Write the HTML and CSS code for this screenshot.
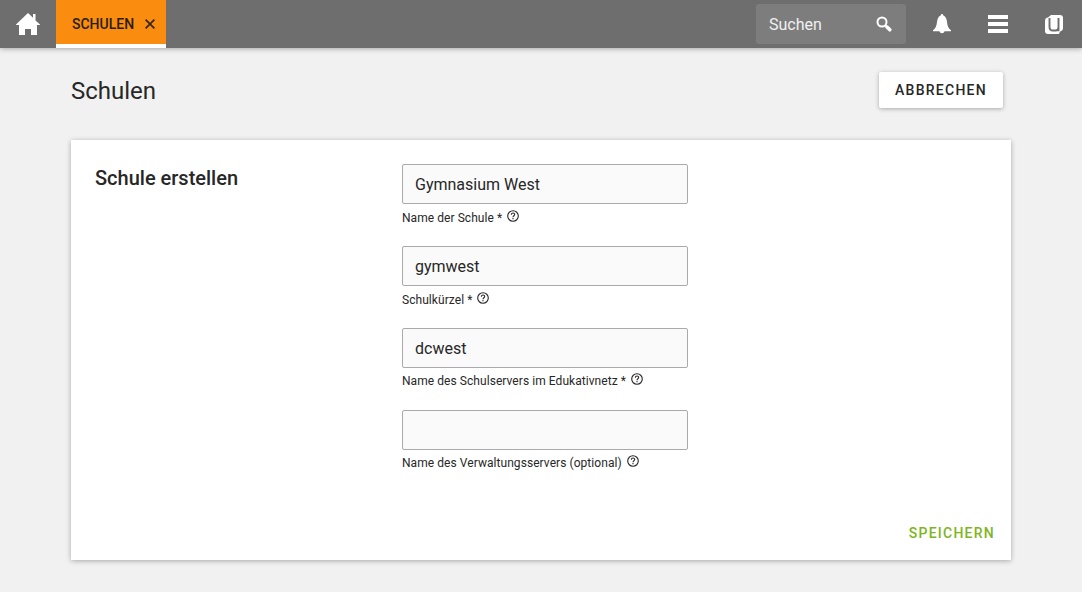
FILE: index.html
```html
<!DOCTYPE html>
<html lang="de">
<head>
<meta charset="utf-8">
<title>Schulen</title>
<link rel="stylesheet" href="styles.css">
</head>
<body>
<header class="topbar">
  <div class="home">
    <svg width="24" height="22" viewBox="0 0 24 22" fill="#fff"><path d="M12 0l5 4.700V1h2.500v6.500L24 11.500v.5h-3v10h-6v-6H9v6H3V12H0v-.5z"/></svg>
  </div>
  <div class="tab">
    <span>SCHULEN</span>
    <svg width="10" height="10" viewBox="0 0 10 10" fill="none" stroke="#35261a" stroke-width="1.700"><path d="M.6.6l8.800 8.800M9.400.6L.6 9.400"/></svg>
  </div>
  <div class="search">
    <span>Suchen</span>
    <svg width="16" height="16" viewBox="0 0 16 16" fill="none" stroke="#fff"><circle cx="6" cy="6" r="4.500" stroke-width="2"/><path d="M9.500 9.500l1.500 1.500" stroke-width="2"/><path d="M11 11l2.800 2.800" stroke-width="3.500" stroke-linecap="round"/></svg>
  </div>
  <nav class="actions">
    <svg width="18" height="20" viewBox="0 0 18 20" fill="#fff"><path d="M9 0c.7 0 1.200.6 1.400 1.500C12.800 2.500 13.600 5 14 8c.5 4 1.300 6.500 4 8.300v.9h-6.400c-.4 1.300-1.300 2-2.600 2s-2.200-.7-2.600-2H0v-.9C2.700 14.500 3.500 12 4 8c.4-3 1.200-5.500 3.600-6.500C7.800.6 8.300 0 9 0z"/></svg>
    <svg width="20" height="18" viewBox="0 0 20 18" fill="#fff"><path d="M0 0h20v4H0zM0 7h20v4H0zM0 14h20v4H0z"/></svg>
    <svg width="18" height="19" viewBox="0 0 18 19"><path fill="#fff" d="M6 0h9a3 3 0 0 1 3 3v10a3.500 3.500 0 0 1-3 3.500L14 19H3a3 3 0 0 1-3-3V6a3.500 3.500 0 0 1 3-3.500z"/><path fill="none" stroke="#6e6e6e" stroke-width="1.900" d="M4.500 3v9Q4.500 15.500 8 15.500h2.500q3 0 3-3.500V3M13.500 13v3.300"/></svg>
  </nav>
</header>
<main class="page">
  <div class="page-head">
    <h1>Schulen</h1>
    <button class="cancel">ABBRECHEN</button>
  </div>
  <section class="card">
    <h2>Schule erstellen</h2>
    <form class="fields">
      <div class="field">
        <input type="text" value="Gymnasium West">
        <label>Name der Schule *<svg class="help" viewBox="0 0 12 12"><circle cx="6" cy="6" r="5.300"/><path d="M4.300 4.700C4.400 2.400 7.700 2.500 7.700 4.500 7.700 5.700 6 5.800 6 7.200M6 8.100v1.200"/></svg></label>
      </div>
      <div class="field">
        <input type="text" value="gymwest">
        <label>Schulkürzel *<svg class="help" viewBox="0 0 12 12"><circle cx="6" cy="6" r="5.300"/><path d="M4.300 4.700C4.400 2.400 7.700 2.500 7.700 4.500 7.700 5.700 6 5.800 6 7.200M6 8.100v1.200"/></svg></label>
      </div>
      <div class="field compact">
        <input type="text" value="dcwest">
        <label>Name des Schulservers im Edukativnetz *<svg class="help" viewBox="0 0 12 12"><circle cx="6" cy="6" r="5.300"/><path d="M4.300 4.700C4.400 2.400 7.700 2.500 7.700 4.500 7.700 5.700 6 5.800 6 7.200M6 8.100v1.200"/></svg></label>
      </div>
      <div class="field compact">
        <input type="text" value="">
        <label>Name des Verwaltungsservers (optional)<svg class="help" viewBox="0 0 12 12"><circle cx="6" cy="6" r="5.300"/><path d="M4.300 4.700C4.400 2.400 7.700 2.500 7.700 4.500 7.700 5.700 6 5.800 6 7.200M6 8.100v1.200"/></svg></label>
      </div>
    </form>
    <button class="save">SPEICHERN</button>
  </section>
</main>
</body>
</html>
```
FILE: styles.css
```css
* { box-sizing: border-box; }
body {
  margin: 0;
  height: 592px;
  overflow: hidden;
  background: #f1f1f1;
  color: #272727;
  font-family: Roboto, sans-serif;
}
svg { display: block; flex: none; }
.topbar {
  display: flex;
  align-items: center;
  height: 48px;
  background: #6e6e6e;
  box-shadow: 0 1px 5px rgba(0, 0, 0, .3);
}
.home { width: 56px; padding: 0 16px; }
.tab {
  display: flex;
  align-items: center;
  justify-content: space-between;
  width: 110px;
  height: 48px;
  padding: 0 11px 0 16px;
  border-bottom: 4px solid #fff;
  background: #fa8c0f;
  color: #272010;
  font-size: 14px;
  font-weight: 500;
}
.tab span, .tab svg { margin-top: 4px; }
.search {
  display: flex;
  align-items: center;
  justify-content: space-between;
  width: 150px;
  height: 40px;
  margin-left: auto;
  padding: 0 14px 0 13px;
  border-radius: 3px;
  background: #7d7d7d;
  color: #f1f1f1;
  font-size: 16px;
}
.actions {
  display: grid;
  grid-template-columns: repeat(3, 56px);
  place-items: center;
  width: 176px;
  padding-left: 8px;
}
.page { width: 940px; margin: 0 71px; }
.page-head {
  display: flex;
  align-items: center;
  justify-content: space-between;
  height: 92px;
  padding: 0 8px 8px 0;
}
h1 { margin: 2px 0 0; font-size: 24px; font-weight: 400; line-height: 36px; }
button {
  border: 0;
  font: 500 14px/36px Roboto, sans-serif;
  letter-spacing: 1.25px;
}
.cancel {
  width: 124px;
  height: 36px;
  padding: 0;
  border-radius: 2px;
  background: #fff;
  color: #272727;
  box-shadow: 0 1px 4px rgba(0, 0, 0, .3);
}
.card {
  display: grid;
  grid-template-columns: 307px 286px 1fr;
  grid-template-rows: 1fr 36px;
  height: 420px;
  padding: 24px 16px 9px 24px;
  background: #fff;
  box-shadow: 0 1px 5px rgba(0, 0, 0, .3);
}
h2 { margin: 0; font-size: 20px; font-weight: 500; line-height: 28px; }
.field { height: 82px; }
input {
  display: block;
  width: 286px;
  height: 40px;
  padding: 0 12px;
  border: 1px solid #aaa;
  border-radius: 2px;
  background: #fafafa;
  color: #272727;
  font: 16px Roboto, sans-serif;
}
label {
  display: flex;
  gap: 5px;
  padding-top: 6px;
  font-size: 12px;
  line-height: 16px;
  letter-spacing: .06px;
}
.compact label { padding-top: 5px; }
.help {
  width: 12px;
  height: 12px;
  fill: none;
  stroke: #272727;
  stroke-width: 1.1;
}
.save {
  grid-column: 3;
  grid-row: 2;
  justify-self: end;
  padding: 0;
  background: none;
  color: #7db523;
}
```
